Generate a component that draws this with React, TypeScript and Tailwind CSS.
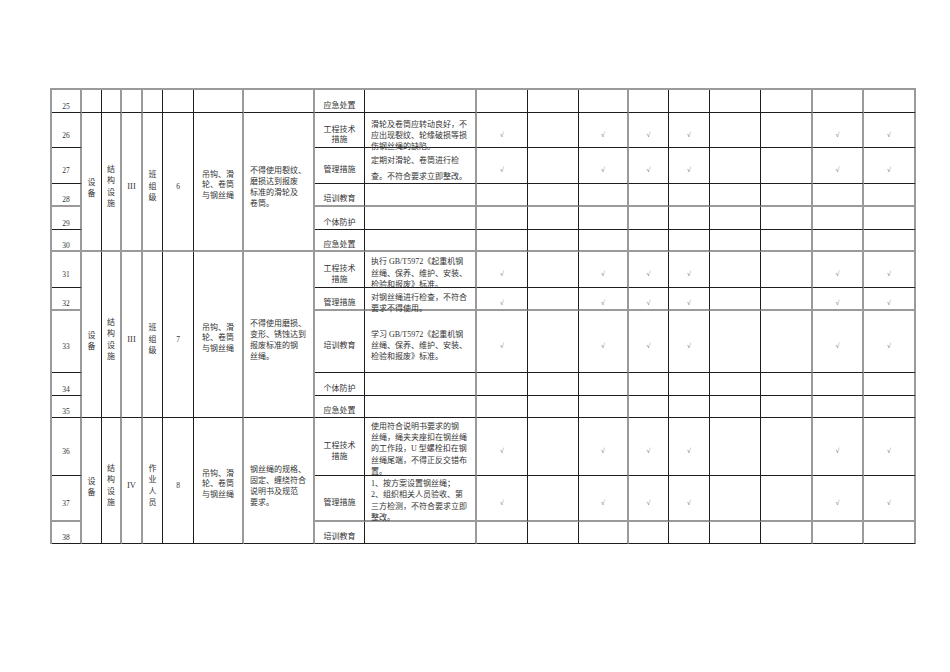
import React from "react";

const colGray = [true, false, true, true, false, false, true, true, false, true, false, false, true, false, false, false, true, true, true];
const rowGray: Record<number, boolean> = {
  25: false, 26: false, 27: false, 28: true, 29: false, 30: true, 31: false,
  32: true, 33: false, 34: false, 35: false, 36: false, 37: true, 38: false,
};

function Cell({
  col,
  end,
  span = 1,
  className = "",
  children,
}: {
  col: number;
  end: number;
  span?: number;
  className?: string;
  children?: React.ReactNode;
}) {
  const r = colGray[col - 1] ? "border-r-2 border-r-[#9a9a9a]" : "border-r border-r-[#1e1e1e]";
  const b = rowGray[end] ? "border-b-2 border-b-[#9a9a9a]" : "border-b border-b-[#1e1e1e]";
  const s = span === 5 ? "row-span-5" : span === 3 ? "row-span-3" : "";
  return <div className={`${r} ${b} ${s} min-w-0 ${className}`}>{children}</div>;
}

const center = "flex flex-col items-center justify-center text-center";
const left = "flex flex-col items-start justify-center text-left";

type Block = {
  span: number;
  end: number;
  b: string[];
  c: string;
  d: string[];
  e: string;
  g: string[];
};

const blocks: Record<number, Block> = {
  26: {
    span: 5,
    end: 30,
    b: ["结", "构", "设", "施"],
    c: "III",
    d: ["班", "组", "级"],
    e: "6",
    g: ["不得使用裂纹、", "磨损达到报废", "标准的滑轮及", "卷筒。"],
  },
  31: {
    span: 5,
    end: 35,
    b: ["结", "构", "设", "施"],
    c: "III",
    d: ["班", "组", "级"],
    e: "7",
    g: ["不得使用磨损、", "变形、锈蚀达到", "报废标准的钢", "丝绳。"],
  },
  36: {
    span: 3,
    end: 38,
    b: ["结", "构", "设", "施"],
    c: "IV",
    d: ["作", "业", "人", "员"],
    e: "8",
    g: ["钢丝绳的规格、", "固定、缠绕符合", "说明书及规范", "要求。"],
  },
};

type RowDef = {
  n: number;
  type: string[];
  desc?: string[];
  descCls?: string;
  checks?: boolean;
};

const rows: RowDef[] = [
  { n: 25, type: ["应急处置"] },
  {
    n: 26,
    type: ["工程技术", "措施"],
    desc: ["滑轮及卷筒应转动良好，不", "应出现裂纹、轮缘破损等损", "伤钢丝绳的缺陷。"],
    descCls: "pt-[10px] leading-[11px]",
    checks: true,
  },
  {
    n: 27,
    type: ["管理措施"],
    desc: ["定期对滑轮、卷筒进行检", "查。不符合要求立即整改。"],
    descCls: "pt-[6px] leading-[16px]",
    checks: true,
  },
  { n: 28, type: ["培训教育"] },
  { n: 29, type: ["个体防护"] },
  { n: 30, type: ["应急处置"] },
  {
    n: 31,
    type: ["工程技术", "措施"],
    desc: ["执行 GB/T5972《起重机钢", "丝绳、保养、维护、安装、", "检验和报废》标准。"],
    descCls: "pt-[8px] leading-[11.5px]",
    checks: true,
  },
  {
    n: 32,
    type: ["管理措施"],
    desc: ["对钢丝绳进行检查，不符合", "要求不得使用。"],
    descCls: "pt-[8px] leading-[11px]",
    checks: true,
  },
  {
    n: 33,
    type: ["培训教育"],
    desc: ["学习 GB/T5972《起重机钢", "丝绳、保养、维护、安装、", "检验和报废》标准。"],
    descCls: "pt-[7px] leading-[11px]",
    checks: true,
  },
  { n: 34, type: ["个体防护"] },
  { n: 35, type: ["应急处置"] },
  {
    n: 36,
    type: ["工程技术", "措施"],
    desc: [
      "使用符合说明书要求的钢",
      "丝绳，绳夹夹座扣在钢丝绳",
      "的工作段，U 型螺栓扣在钢",
      "丝绳尾端，不得正反交错布",
      "置。",
    ],
    descCls: "pt-[5px] leading-[11.25px]",
    checks: true,
  },
  {
    n: 37,
    type: ["管理措施"],
    desc: ["1、按方案设置钢丝绳；", "2、组织相关人员验收、第", "三方检测，不符合要求立即", "整改。"],
    descCls: "pt-[5px] leading-[11.5px]",
    checks: true,
  },
  { n: 38, type: ["培训教育"] },
];

const checkCols = [11, 13, 14, 15, 18, 19];

function Lines({ lines }: { lines: string[] }) {
  return (
    <>
      {lines.map((l, i) => (
        <div key={i} className="whitespace-nowrap">
          {l}
        </div>
      ))}
    </>
  );
}

function BlockCells({ blk }: { blk: Block }) {
  const { span, end } = blk;
  return (
    <>
      <Cell col={2} end={end} span={span} className={`${center} pt-[12px] leading-[11px]`}>
        <Lines lines={["设", "备"]} />
      </Cell>
      <Cell col={3} end={end} span={span} className={`${center} pt-[10px] leading-[11.5px]`}>
        <Lines lines={blk.b} />
      </Cell>
      <Cell col={4} end={end} span={span} className={`${center} pt-[10px] text-[8.5px]`}>
        {blk.c}
      </Cell>
      <Cell col={5} end={end} span={span} className={`${center} pt-[10px] leading-[11.5px]`}>
        <Lines lines={blk.d} />
      </Cell>
      <Cell col={6} end={end} span={span} className={`${center} pt-[10px] text-[7.5px]`}>
        {blk.e}
      </Cell>
      <Cell col={7} end={end} span={span} className={`${center} pt-[8px] leading-[10.5px]`}>
        <Lines lines={["吊钩、滑", "轮、卷筒", "与钢丝绳"]} />
      </Cell>
      <Cell col={8} end={end} span={span} className={`${left} pl-[6px] pt-[10px] leading-[11px]`}>
        <Lines lines={blk.g} />
      </Cell>
    </>
  );
}

function Row({ r }: { r: RowDef }) {
  const blk = blocks[r.n];
  return (
    <>
      <Cell col={1} end={r.n} className={`${center} pt-[10px] text-[7.5px]`}>
        {r.n}
      </Cell>
      {r.n === 25 &&
        [2, 3, 4, 5, 6, 7, 8].map((c) => <Cell key={c} col={c} end={25} />)}
      {blk && <BlockCells blk={blk} />}
      <Cell col={9} end={r.n} className={`${center} pt-[10px] leading-[10.5px]`}>
        <Lines lines={r.type} />
      </Cell>
      <Cell col={10} end={r.n} className={`${left} pl-[6px] ${r.descCls ?? ""}`}>
        {r.desc && <Lines lines={r.desc} />}
      </Cell>
      {[11, 12, 13, 14, 15, 16, 17, 18, 19].map((c) => (
        <Cell key={c} col={c} end={r.n} className={`${center} pt-[10px] text-[7px] text-[#555]`}>
          {r.checks && checkCols.includes(c) ? "√" : null}
        </Cell>
      ))}
    </>
  );
}

export default function App() {
  return (
    <div className="w-[950px] h-[672px] bg-white pt-[88px] pl-[50px] font-['Liberation_Serif','Noto_Sans_CJK_SC',serif] text-[8px] leading-[11px] text-[#333]">
      <div className="grid w-max grid-cols-[30px_20px_20px_21px_20px_31px_50px_71px_50px_112px_51px_51px_50px_40px_41px_51px_52px_51px_52px] grid-rows-[23px_35px_36px_23px_23px_22px_36px_23px_62px_23px_22px_58px_46px_22px] border-t-2 border-l-2 border-t-[#9a9a9a] border-l-[#9a9a9a]">
        {rows.map((r) => (
          <Row key={r.n} r={r} />
        ))}
      </div>
    </div>
  );
}
